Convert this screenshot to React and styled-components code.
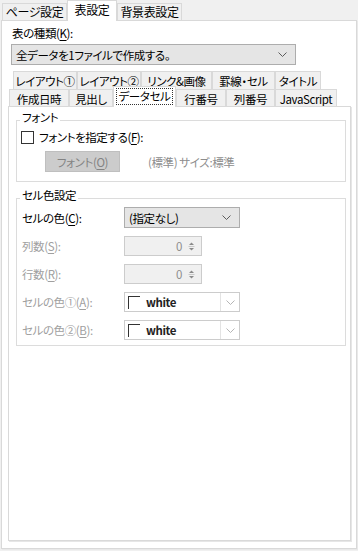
import React from 'react'
import styled, { createGlobalStyle } from 'styled-components'

const GlobalStyle = createGlobalStyle`
  html, body {
    margin: 0;
    padding: 0;
    background: #f0f0f0;
  }
  body {
    font-family: "Noto Sans CJK JP", "Noto Sans", sans-serif;
    font-size: 11.5px;
    line-height: 16px;
    letter-spacing: -0.4px;
    color: #000;
    font-feature-settings: "palt";
  }
  u { text-underline-offset: 2px; }
`

const Window = styled.div`
  width: 358px;
  height: 551px;
  box-sizing: border-box;
  padding: 0 1px 2px 1px;
  display: flex;
  flex-direction: column;
`

const OuterStrip = styled.div`
  display: flex;
  align-items: flex-end;
  height: 21px;
  padding-left: 1px;
  margin-bottom: -1px;
`

const OuterTab = styled.div`
  width: ${p => p.$w}px;
  height: ${p => (p.$active ? 21 : 17)}px;
  margin-bottom: ${p => (p.$active ? 0 : 1)}px;
  box-sizing: border-box;
  border: 1px solid #d9d9d9;
  border-bottom: none;
  background: ${p => (p.$active ? '#fff' : '#f0f0f0')};
  position: relative;
  z-index: ${p => (p.$active ? 2 : 0)};
  display: flex;
  align-items: center;
  justify-content: center;
  padding-bottom: ${p => (p.$active ? 2 : 0)}px;
  font-size: 12px;
`

const OuterPanel = styled.div`
  flex: 1;
  display: flex;
  flex-direction: column;
  background: #fff;
  border: 1px solid #d9d9d9;
  box-shadow: 1px 1px 0 #e9e9e9;
  padding: 4px 5px 7px 6px;
  position: relative;
  z-index: 1;
`

const FieldLabel = styled.div`
  margin-left: 4px;
  height: 16px;
`

const Select = styled.div`
  width: ${p => p.$w}px;
  height: 21px;
  box-sizing: border-box;
  margin-left: ${p => p.$ml || 0}px;
  margin-top: ${p => p.$mt || 0}px;
  border: 1px solid #adadad;
  background: #e5e5e5;
  display: flex;
  align-items: center;
  justify-content: space-between;
  padding: 0 8px 0 4px;
`

const Chevron = ({ color = '#5c5c5c' }) => (
  <svg width="9" height="5" viewBox="0 0 9 5">
    <path d="M0.5 0.5 L4.5 4.5 L8.5 0.5" fill="none" stroke={color} strokeWidth="1" />
  </svg>
)

const TabControl = styled.div`
  flex: 1;
  margin-top: 6px;
  display: flex;
  flex-direction: column;
`

const TabRow = styled.div`
  display: flex;
  align-items: flex-end;
  padding-left: ${p => p.$indent}px;
  height: ${p => p.$h}px;
  margin-bottom: ${p => p.$mb || 0}px;
`

const InnerTab = styled.div`
  width: ${p => p.$w}px;
  height: ${p => (p.$active ? 21 : 18)}px;
  box-sizing: border-box;
  border: 1px solid #d9d9d9;
  border-bottom: none;
  background: ${p => (p.$active ? '#fff' : '#f0f0f0')};
  position: relative;
  z-index: ${p => (p.$active ? 2 : 0)};
  display: flex;
  align-items: center;
  justify-content: center;
  white-space: nowrap;
  padding-bottom: ${p => (p.$active ? 1 : 0)}px;
`

const FocusRect = styled.span`
  border: 1px dotted #333;
  padding: 0 2px;
  line-height: 15px;
`

const InnerPanel = styled.div`
  flex: 1;
  background: #fff;
  border: 1px solid #d9d9d9;
  box-shadow: 1px 1px 0 #e6e6e6;
  padding: 4px 4px 0 7px;
  position: relative;
  z-index: 1;
`

const Group = styled.fieldset`
  margin: ${p => p.$mt || 0}px 0 0 0;
  padding: 0 3px ${p => p.$pb}px 3px;
  border: 1px solid #dcdcdc;
  min-width: 0;
`

const Legend = styled.legend`
  padding: 0 2px 6px 2px;
  line-height: 12px;
`

const CheckRow = styled.label`
  margin-top: 1px;
  height: 14px;
  display: flex;
  align-items: center;
  gap: 5px;
`

const CheckBox = styled.span`
  width: 13px;
  height: 13px;
  box-sizing: border-box;
  border: 1px solid #333;
  background: #fff;
  margin-left: 1px;
`

const FontRow = styled.div`
  margin-top: 7px;
  display: flex;
  align-items: center;
`

const PushButton = styled.div`
  width: 75px;
  height: 21px;
  box-sizing: border-box;
  margin-left: 25px;
  border: 1px solid #bfbfbf;
  background: #cccccc;
  color: #838383;
  display: flex;
  align-items: center;
  justify-content: center;
`

const Hint = styled.span`
  margin-left: 28px;
  color: #8d8d8d;
`

const Rows = styled.div`
  display: grid;
  grid-template-columns: 104px 1fr;
  row-gap: 8px;
  align-items: center;
`

const RowLabel = styled.div`
  padding-left: 2px;
  color: ${p => (p.$disabled ? '#a0a0a0' : '#000')};
`

const SpinBox = styled.div`
  width: 78px;
  height: 20px;
  box-sizing: border-box;
  border: 1px solid #cccccc;
  background: #f0f0f0;
  display: flex;
  align-items: center;
  justify-content: flex-end;
  gap: 6px;
  padding-right: 6px;
  color: #8d8d8d;
`

const SpinArrows = () => (
  <svg width="7" height="12" viewBox="0 0 7 12">
    <path d="M3.5 2.5 L6 5 H1 Z" fill="#8a8a8a" />
    <line x1="0.5" y1="6.5" x2="6.5" y2="6.5" stroke="#c8c8c8" />
    <path d="M1 8 H6 L3.5 10.5 Z" fill="#8a8a8a" />
  </svg>
)

const ColorCombo = styled.div`
  width: 116px;
  height: 20px;
  box-sizing: border-box;
  border: 1px solid #cccccc;
  background: #fff;
  display: flex;
  align-items: center;
`

const Swatch = styled.span`
  width: 12px;
  height: 13px;
  box-sizing: border-box;
  margin-left: 3px;
  border-top: 1px solid #333;
  border-left: 1px solid #333;
  background: #fff;
`

const ColorName = styled.span`
  flex: 1;
  margin-left: 6px;
  font-weight: 600;
  color: #222;
`

const ComboArrow = styled.span`
  width: 18px;
  height: 18px;
  border-left: 1px solid #e3e3e3;
  display: flex;
  align-items: center;
  justify-content: center;
`

const outerTabs = [
  { label: 'ページ設定', w: 65 },
  { label: '表設定', w: 50, active: true },
  { label: '背景表設定', w: 65 },
]

const backRow = [
  { label: 'レイアウト①', w: 64 },
  { label: 'レイアウト②', w: 64 },
  { label: 'リンク&画像', w: 71 },
  { label: '罫線・セル', w: 63 },
  { label: 'タイトル', w: 46 },
]

const frontRow = [
  { label: '作成日時', w: 60 },
  { label: '見出し', w: 44 },
  { label: 'データセル', w: 63, active: true },
  { label: '行番号', w: 50 },
  { label: '列番号', w: 49 },
  { label: 'JavaScript', w: 62 },
]

const Key = ({ k }) => (
  <>
    (<u>{k}</u>)
  </>
)

export default function App() {
  return (
    <>
      <GlobalStyle />
      <Window>
        <OuterStrip>
          {outerTabs.map(t => (
            <OuterTab key={t.label} $w={t.w} $active={t.active}>
              {t.label}
            </OuterTab>
          ))}
        </OuterStrip>

        <OuterPanel>
          <FieldLabel>
            表の種類<Key k="K" />:
          </FieldLabel>
          <Select $w={285} $ml={3} $mt={3}>
            <span>全データを1ファイルで作成する。</span>
            <Chevron />
          </Select>

          <TabControl>
            <TabRow $indent={5} $h={18}>
              {backRow.map(t => (
                <InnerTab key={t.label} $w={t.w}>
                  {t.label}
                </InnerTab>
              ))}
            </TabRow>
            <TabRow $indent={1} $h={18} $mb={-1}>
              {frontRow.map(t => (
                <InnerTab key={t.label} $w={t.w} $active={t.active}>
                  {t.active ? <FocusRect>{t.label}</FocusRect> : t.label}
                </InnerTab>
              ))}
            </TabRow>

            <InnerPanel>
              <Group $pb={9}>
                <Legend>フォント</Legend>
                <CheckRow>
                  <CheckBox />
                  <span>
                    フォントを指定する<Key k="F" />:
                  </span>
                </CheckRow>
                <FontRow>
                  <PushButton>
                    フォント<Key k="O" />
                  </PushButton>
                  <Hint>(標準) サイズ:標準</Hint>
                </FontRow>
              </Group>

              <Group $mt={7} $pb={5}>
                <Legend>セル色設定</Legend>
                <Rows>
                  <RowLabel>
                    セルの色<Key k="C" />:
                  </RowLabel>
                  <Select $w={116}>
                    <span>(指定なし)</span>
                    <Chevron />
                  </Select>

                  <RowLabel $disabled>
                    列数<Key k="S" />:
                  </RowLabel>
                  <SpinBox>
                    <span>0</span>
                    <SpinArrows />
                  </SpinBox>

                  <RowLabel $disabled>
                    行数<Key k="R" />:
                  </RowLabel>
                  <SpinBox>
                    <span>0</span>
                    <SpinArrows />
                  </SpinBox>

                  <RowLabel $disabled>
                    セルの色①<Key k="A" />:
                  </RowLabel>
                  <ColorCombo>
                    <Swatch />
                    <ColorName>white</ColorName>
                    <ComboArrow>
                      <Chevron color="#b5b5b5" />
                    </ComboArrow>
                  </ColorCombo>

                  <RowLabel $disabled>
                    セルの色②<Key k="B" />:
                  </RowLabel>
                  <ColorCombo>
                    <Swatch />
                    <ColorName>white</ColorName>
                    <ComboArrow>
                      <Chevron color="#b5b5b5" />
                    </ComboArrow>
                  </ColorCombo>
                </Rows>
              </Group>
            </InnerPanel>
          </TabControl>
        </OuterPanel>
      </Window>
    </>
  )
}
